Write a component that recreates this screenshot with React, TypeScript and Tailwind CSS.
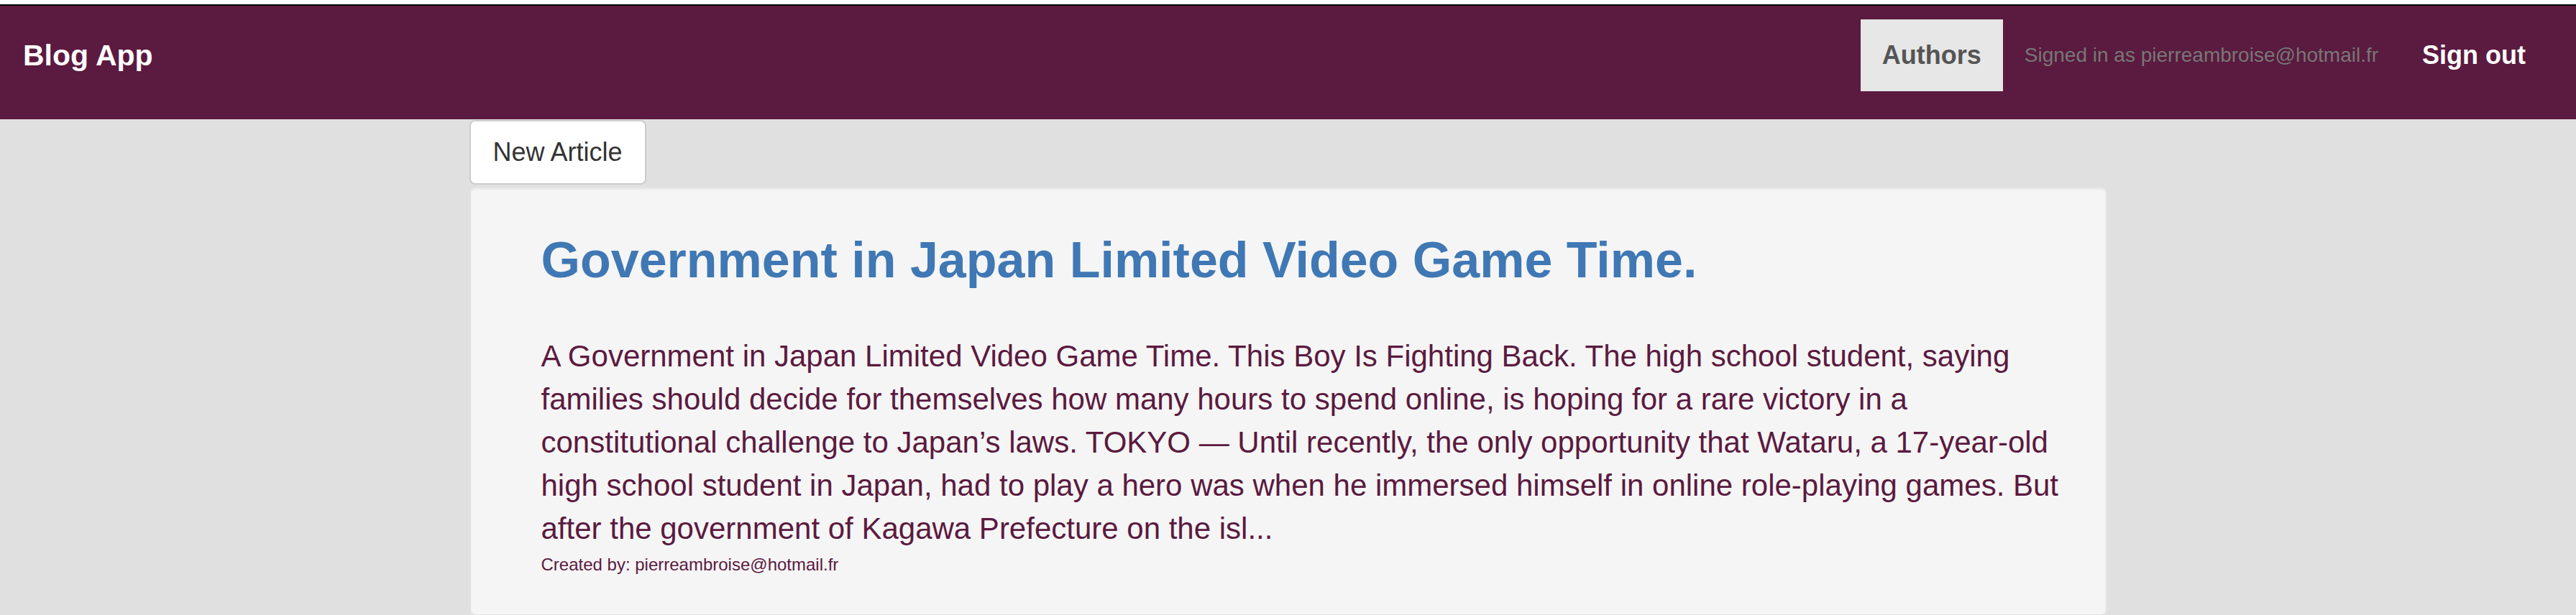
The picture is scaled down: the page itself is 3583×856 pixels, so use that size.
const article = {
  title: "Government in Japan Limited Video Game Time.",
  body: "A Government in Japan Limited Video Game Time. This Boy Is Fighting Back. The high school student, saying families should decide for themselves how many hours to spend online, is hoping for a rare victory in a constitutional challenge to Japan’s laws. TOKYO — Until recently, the only opportunity that Wataru, a 17-year-old high school student in Japan, had to play a hero was when he immersed himself in online role-playing games. But after the government of Kagawa Prefecture on the isl...",
  author: "pierreambroise@hotmail.fr",
};

function Navbar() {
  return (
    <nav className="h-[160px] border-t-2 border-black bg-[#5b1a3f]">
      <div className="mt-[19px] flex h-[100px] items-center">
        <a className="pl-[32px] text-[41px] leading-none font-bold text-white">Blog App</a>
        <div className="ml-auto flex h-full items-center">
          <a className="flex h-full items-center bg-[#e7e7e7] px-[30px] text-[36px] font-bold text-[#555]">
            Authors
          </a>
          <span className="ml-[30px] text-[28px] text-[#777]">
            Signed in as pierreambroise@hotmail.fr
          </span>
          <a className="mr-[70px] ml-[61px] text-[36px] font-bold text-white">Sign out</a>
        </div>
      </div>
    </nav>
  );
}

function ArticleCard() {
  return (
    <article className="mt-[3px] rounded-[8px] border-2 border-[#e3e3e3] bg-[#f5f5f5] pt-[61px] pr-[38px] pb-[52px] pl-[98px] shadow-[inset_0_2px_2px_rgba(0,0,0,0.05)]">
      <h1 className="text-[70px] leading-[78px] font-bold text-[#3f78b4]">{article.title}</h1>
      <p className="mt-[65px] text-[42px] leading-[60px] text-[#5b1a3f]">{article.body}</p>
      <p className="mt-[3px] text-[24px] leading-[34px] text-[#5b1a3f]">
        Created by: {article.author}
      </p>
    </article>
  );
}

export default function App() {
  return (
    <div className="h-[856px] overflow-hidden bg-[#e0e0e0] font-['Liberation_Sans',Arial,sans-serif]">
      <div className="h-[6px] bg-white" />
      <Navbar />
      <main className="mx-auto w-[2278px]">
        <button className="mt-px h-[90px] rounded-[8px] border-2 border-[#ccc] bg-white px-[31px] text-[36px] text-[#333]">
          New Article
        </button>
        <ArticleCard />
      </main>
    </div>
  );
}
